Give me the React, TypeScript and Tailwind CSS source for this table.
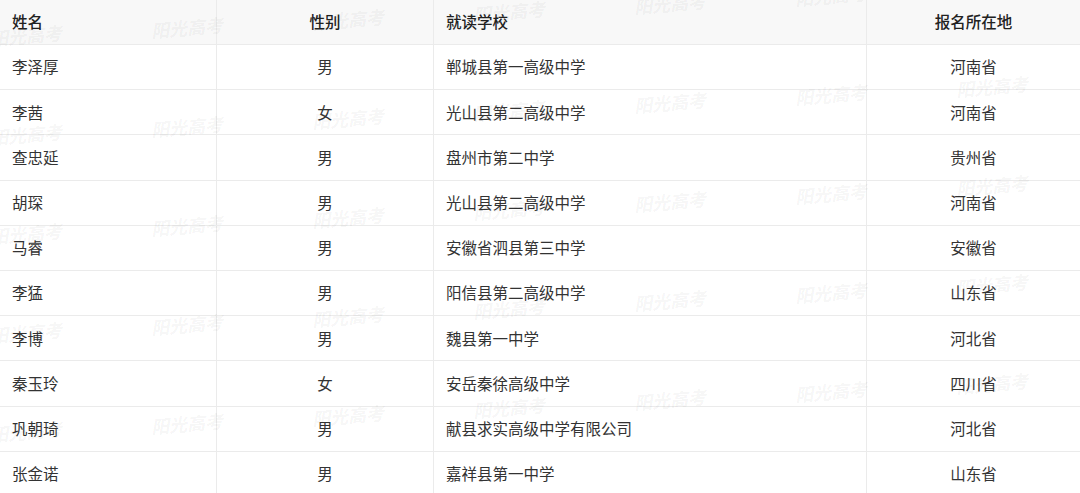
import React from 'react';

interface Student {
  name: string;
  gender: string;
  school: string;
  region: string;
}

const students: Student[] = [
  { name: '李泽厚', gender: '男', school: '郸城县第一高级中学', region: '河南省' },
  { name: '李茜', gender: '女', school: '光山县第二高级中学', region: '河南省' },
  { name: '查忠延', gender: '男', school: '盘州市第二中学', region: '贵州省' },
  { name: '胡琛', gender: '男', school: '光山县第二高级中学', region: '河南省' },
  { name: '马睿', gender: '男', school: '安徽省泗县第三中学', region: '安徽省' },
  { name: '李猛', gender: '男', school: '阳信县第二高级中学', region: '山东省' },
  { name: '李博', gender: '男', school: '魏县第一中学', region: '河北省' },
  { name: '秦玉玲', gender: '女', school: '安岳秦徐高级中学', region: '四川省' },
  { name: '巩朝琦', gender: '男', school: '献县求实高级中学有限公司', region: '河北省' },
  { name: '张金诺', gender: '男', school: '嘉祥县第一中学', region: '山东省' },
];

// watermark grid: 7 columns, each column drifts upward a little
const marks: { left: number; top: number }[] = [];
for (let r = -1; r < 5; r++) {
  for (let c = 0; c < 7; c++) {
    marks.push({ left: -10 + 161 * c, top: 28 + 99 * r - 8 * c });
  }
}

const rowCls = 'grid grid-cols-[217px_217px_433px_1fr] h-[45.2px] border-b border-[#ebebeb]';

const Watermarks: React.FC = () => (
  <div className="pointer-events-none absolute inset-0 overflow-hidden">
    {marks.map((m, i) => (
      <span
        key={i}
        className="absolute whitespace-nowrap font-['Liberation_Serif','Noto_Sans_CJK_SC',serif] text-[18px] font-bold italic leading-none text-black/[0.055] -rotate-[5deg]"
        style={{ left: m.left, top: m.top }}
      >
        阳光高考
      </span>
    ))}
  </div>
);

export default function App() {
  return (
    <div className="relative h-[493px] w-[1080px] overflow-hidden bg-white font-['Noto_Sans_CJK_SC','Noto_Sans',sans-serif] text-[15.5px] text-[#333]">
      <div className={`${rowCls} h-[45px] bg-[#f8f8f8] font-medium text-[#222]`}>
        <div className="flex items-center border-r border-[#ebebeb] pl-3">姓名</div>
        <div className="flex items-center justify-center border-r border-[#ebebeb]">性别</div>
        <div className="flex items-center border-r border-[#ebebeb] pl-3">就读学校</div>
        <div className="flex items-center justify-center">报名所在地</div>
      </div>
      {students.map((s, i) => (
        <div key={i} className={rowCls}>
          <div className="flex items-center border-r border-[#ebebeb] pl-3">{s.name}</div>
          <div className="flex items-center justify-center border-r border-[#ebebeb]">{s.gender}</div>
          <div className="flex items-center border-r border-[#ebebeb] pl-3">{s.school}</div>
          <div className="flex items-center justify-center">{s.region}</div>
        </div>
      ))}
      <Watermarks />
    </div>
  );
}
